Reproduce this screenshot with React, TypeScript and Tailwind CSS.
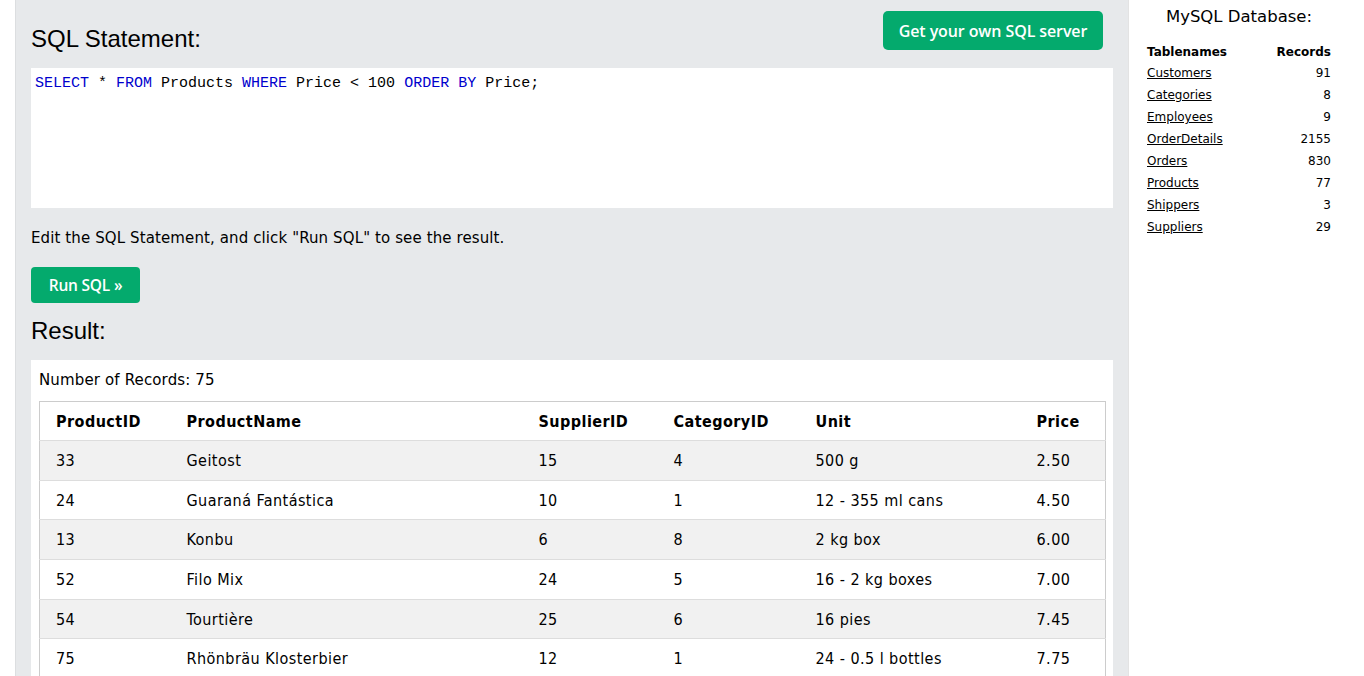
import React from "react";

const rows: [string, string, string, string, string, string][] = [
  ["33", "Geitost", "15", "4", "500 g", "2.50"],
  ["24", "Guaraná Fantástica", "10", "1", "12 - 355 ml cans", "4.50"],
  ["13", "Konbu", "6", "8", "2 kg box", "6.00"],
  ["52", "Filo Mix", "24", "5", "16 - 2 kg boxes", "7.00"],
  ["54", "Tourtière", "25", "6", "16 pies", "7.45"],
  ["75", "Rhönbräu Klosterbier", "12", "1", "24 - 0.5 l bottles", "7.75"],
];

const tables: [string, string][] = [
  ["Customers", "91"],
  ["Categories", "8"],
  ["Employees", "9"],
  ["OrderDetails", "2155"],
  ["Orders", "830"],
  ["Products", "77"],
  ["Shippers", "3"],
  ["Suppliers", "29"],
];

const verdana = "font-['Verdana','DejaVu_Sans',sans-serif]";

export default function App() {
  return (
    <div className="flex w-[1364px] h-[676px] overflow-hidden bg-white">
      <div className="w-[15px] shrink-0 bg-white" />
      <div className="w-[1113px] shrink-0 bg-[#e7e9eb] border-l border-[#dcdee0] pl-[15px] pr-[15px] pt-[11px]">
        <div className="flex items-start justify-between h-[57px]">
          <h2 className="mt-[10px] text-[24px] leading-[36px] text-black font-['Liberation_Sans',Arial,sans-serif] font-normal">
            SQL Statement:
          </h2>
          <button className="mr-[10px] h-[39px] w-[220px] rounded-[5px] bg-[#04aa6d] text-white text-[16px] font-semibold font-['Source_Sans_Pro','Open_Sans',sans-serif] tracking-[-0.1px]">
            Get your own SQL server
          </button>
        </div>
        <div className="h-[140px] bg-white pl-[4px] pt-[7px] text-[15px] leading-[18px] font-['Liberation_Mono','Courier_New',monospace] text-black">
          <span className="text-[#0000cd]">SELECT</span> * <span className="text-[#0000cd]">FROM</span> Products{" "}
          <span className="text-[#0000cd]">WHERE</span> Price &lt; 100 <span className="text-[#0000cd]">ORDER BY</span> Price;
        </div>
        <p className={`mt-[19px] text-[15px] leading-[22px] tracking-[0.11px] text-black ${verdana}`}>
          Edit the SQL Statement, and click "Run SQL" to see the result.
        </p>
        <button className="mt-[18px] h-[36px] w-[109px] rounded-[4px] bg-[#04aa6d] pt-[2px] text-white text-[15.5px] font-semibold font-['Source_Sans_Pro','Open_Sans',sans-serif] tracking-[-0.2px]">
          Run SQL »
        </button>
        <h2 className="mt-[10px] text-[24px] leading-[36px] text-black font-['Liberation_Sans',Arial,sans-serif] font-normal">
          Result:
        </h2>
        <div className="mt-[11px] bg-white px-[8px] pt-[9px] pb-[8px]">
          <div className={`text-[15px] leading-[22px] tracking-[0.14px] text-black ${verdana}`}>Number of Records: 75</div>
          <table className="mt-[10px] w-[1066px] border-collapse border border-[#cccccc] text-[16px] tracking-[0.45px] text-black font-['DejaVu_Sans_Condensed','DejaVu_Sans',sans-serif] [font-stretch:condensed] table-fixed">
            <colgroup>
              <col className="w-[131px]" />
              <col className="w-[352px]" />
              <col className="w-[135px]" />
              <col className="w-[142px]" />
              <col className="w-[221px]" />
              <col className="w-[85px]" />
            </colgroup>
            <thead>
              <tr className="border-b border-[#dddddd] bg-white">
                {["ProductID", "ProductName", "SupplierID", "CategoryID", "Unit", "Price"].map((h) => (
                  <th key={h} className="h-[39px] pl-[16px] pt-[2px] text-left font-bold align-middle">
                    {h}
                  </th>
                ))}
              </tr>
            </thead>
            <tbody>
              {rows.map((r, i) => (
                <tr key={i} className={`border-b border-[#dddddd] ${i % 2 === 0 ? "bg-[#f1f1f1]" : "bg-white"}`}>
                  {r.map((c, j) => (
                    <td key={j} className="h-[39.7px] pl-[16px] pt-[1px] text-left align-middle">
                      {c}
                    </td>
                  ))}
                </tr>
              ))}
            </tbody>
          </table>
        </div>
      </div>
      <div className="flex-1 bg-white border-l border-[#e3e3e3] pl-[18px] pt-[6px]">
        <div className={`w-[184px] text-center text-[16.5px] leading-[22px] text-black ${verdana}`}>MySQL Database:</div>
        <table className={`mt-[13px] w-[184px] text-[12px] text-black ${verdana}`}>
          <thead>
            <tr className="h-[21px]">
              <th className="text-left font-bold">Tablenames</th>
              <th className="text-right font-bold">Records</th>
            </tr>
          </thead>
          <tbody>
            {tables.map(([n, c]) => (
              <tr key={n} className="h-[22px]">
                <td className="text-left">
                  <a className="underline text-black">{n}</a>
                </td>
                <td className="text-right">{c}</td>
              </tr>
            ))}
          </tbody>
        </table>
      </div>
    </div>
  );
}
